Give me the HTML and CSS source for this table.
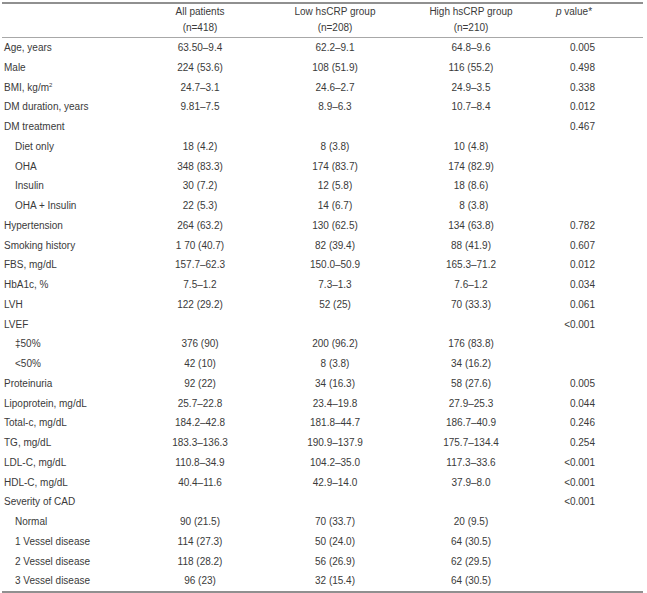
FILE: index.html
```html
<!DOCTYPE html>
<html>
<head>
<meta charset="utf-8">
<link rel="stylesheet" href="styles.css">
</head>
<body>
<table class="tbl">
  <colgroup>
    <col class="c-label">
    <col class="c-all">
    <col class="c-low">
    <col class="c-high">
    <col class="c-p">
  </colgroup>
  <thead>
    <tr>
      <th class="h-label"></th>
      <th class="h-val">All patients<br>(n=418)</th>
      <th class="h-val">Low hsCRP group<br>(n=208)</th>
      <th class="h-val">High hsCRP group<br>(n=210)</th>
      <th class="h-p"><i>p</i> value*</th>
    </tr>
  </thead>
  <tbody>
    <tr><td class="lbl">Age, years</td><td>63.50–9.4</td><td>62.2–9.1</td><td>64.8–9.6</td><td class="pv">0.005</td></tr>
    <tr><td class="lbl">Male</td><td>224 (53.6)</td><td>108 (51.9)</td><td>116 (55.2)</td><td class="pv">0.498</td></tr>
    <tr><td class="lbl">BMI, kg/m<sup class="sup">2</sup></td><td>24.7–3.1</td><td>24.6–2.7</td><td>24.9–3.5</td><td class="pv">0.338</td></tr>
    <tr><td class="lbl">DM duration, years</td><td>9.81–7.5</td><td>8.9–6.3</td><td>10.7–8.4</td><td class="pv">0.012</td></tr>
    <tr><td class="lbl">DM treatment</td><td></td><td></td><td></td><td class="pv">0.467</td></tr>
    <tr><td class="lbl sub">Diet only</td><td>18 (4.2)</td><td>8 (3.8)</td><td>10 (4.8)</td><td class="pv"></td></tr>
    <tr><td class="lbl sub">OHA</td><td>348 (83.3)</td><td>174 (83.7)</td><td>174 (82.9)</td><td class="pv"></td></tr>
    <tr><td class="lbl sub">Insulin</td><td>30 (7.2)</td><td>12 (5.8)</td><td>18 (8.6)</td><td class="pv"></td></tr>
    <tr><td class="lbl sub">OHA + Insulin</td><td>22 (5.3)</td><td>14 (6.7)</td><td>&nbsp;&nbsp;8 (3.8)</td><td class="pv"></td></tr>
    <tr><td class="lbl">Hypertension</td><td>264 (63.2)</td><td>130 (62.5)</td><td>134 (63.8)</td><td class="pv">0.782</td></tr>
    <tr><td class="lbl">Smoking history</td><td>1 70 (40.7)</td><td>82 (39.4)</td><td>88 (41.9)</td><td class="pv">0.607</td></tr>
    <tr><td class="lbl">FBS, mg/dL</td><td>157.7–62.3</td><td>150.0–50.9</td><td>165.3–71.2</td><td class="pv">0.012</td></tr>
    <tr><td class="lbl">HbA1c, %</td><td>7.5–1.2</td><td>7.3–1.3</td><td>7.6–1.2</td><td class="pv">0.034</td></tr>
    <tr><td class="lbl">LVH</td><td>122 (29.2)</td><td>52 (25)</td><td>70 (33.3)</td><td class="pv">0.061</td></tr>
    <tr><td class="lbl">LVEF</td><td></td><td></td><td></td><td class="pv">&lt;0.001</td></tr>
    <tr><td class="lbl sub">‡50%</td><td>376 (90)</td><td>200 (96.2)</td><td>176 (83.8)</td><td class="pv"></td></tr>
    <tr><td class="lbl sub">&lt;50%</td><td>42 (10)</td><td>8 (3.8)</td><td>34 (16.2)</td><td class="pv"></td></tr>
    <tr><td class="lbl">Proteinuria</td><td>92 (22)</td><td>34 (16.3)</td><td>58 (27.6)</td><td class="pv">0.005</td></tr>
    <tr><td class="lbl">Lipoprotein, mg/dL</td><td>25.7–22.8</td><td>23.4–19.8</td><td>27.9–25.3</td><td class="pv">0.044</td></tr>
    <tr><td class="lbl">Total-c, mg/dL</td><td>184.2–42.8</td><td>181.8–44.7</td><td>186.7–40.9</td><td class="pv">0.246</td></tr>
    <tr><td class="lbl">TG, mg/dL</td><td>183.3–136.3</td><td>190.9–137.9</td><td>175.7–134.4</td><td class="pv">0.254</td></tr>
    <tr><td class="lbl">LDL-C, mg/dL</td><td>110.8–34.9</td><td>104.2–35.0</td><td>117.3–33.6</td><td class="pv">&lt;0.001</td></tr>
    <tr><td class="lbl">HDL-C, mg/dL</td><td>40.4–11.6</td><td>42.9–14.0</td><td>37.9–8.0</td><td class="pv">&lt;0.001</td></tr>
    <tr><td class="lbl">Severity of CAD</td><td></td><td></td><td></td><td class="pv">&lt;0.001</td></tr>
    <tr><td class="lbl sub">Normal</td><td>90 (21.5)</td><td>70 (33.7)</td><td>20 (9.5)</td><td class="pv"></td></tr>
    <tr><td class="lbl sub">1 Vessel disease</td><td>114 (27.3)</td><td>50 (24.0)</td><td>64 (30.5)</td><td class="pv"></td></tr>
    <tr><td class="lbl sub">2 Vessel disease</td><td>118 (28.2)</td><td>56 (26.9)</td><td>62 (29.5)</td><td class="pv"></td></tr>
    <tr><td class="lbl sub">3 Vessel disease</td><td>96 (23)</td><td>32 (15.4)</td><td>64 (30.5)</td><td class="pv"></td></tr>
  </tbody>
</table>
</body>
</html>
```

FILE: styles.css
```css
html, body {
  margin: 0;
  padding: 0;
  background: #ffffff;
}

body {
  font-family: "Liberation Sans", Arial, sans-serif;
  font-size: 10px;
  color: #3a3a3a;
}

.tbl {
  margin: 2px 0 0 2px;
  width: 641px;
  border-collapse: collapse;
  table-layout: fixed;
  border-top: 2px solid #909090;
  border-bottom: 2px solid #909090;
}

.c-label { width: 133px; }
.c-all { width: 130px; }
.c-low { width: 140px; }
.c-high { width: 132px; }
.c-p { width: 106px; }

thead th {
  font-weight: normal;
  line-height: 16px;
  padding: 0 0 1px 0;
  height: 29px;
  vertical-align: top;
  border-bottom: 1px solid #a8a8a8;
}

.h-val {
  text-align: center;
}

.h-p {
  text-align: center;
  padding-right: 32px;
}

tbody td {
  height: 19.75px;
  padding: 0;
  line-height: 12px;
  text-align: center;
  vertical-align: middle;
  white-space: pre;
}

tbody tr:first-child td {
  height: 20px;
}

td.lbl {
  text-align: left;
  padding-left: 2px;
}

td.sub {
  padding-left: 13px;
}

td.pv {
  text-align: right;
  padding-right: 48px;
}

.sup {
  font-size: 6px;
  vertical-align: 4px;
  line-height: 0;
}
```
